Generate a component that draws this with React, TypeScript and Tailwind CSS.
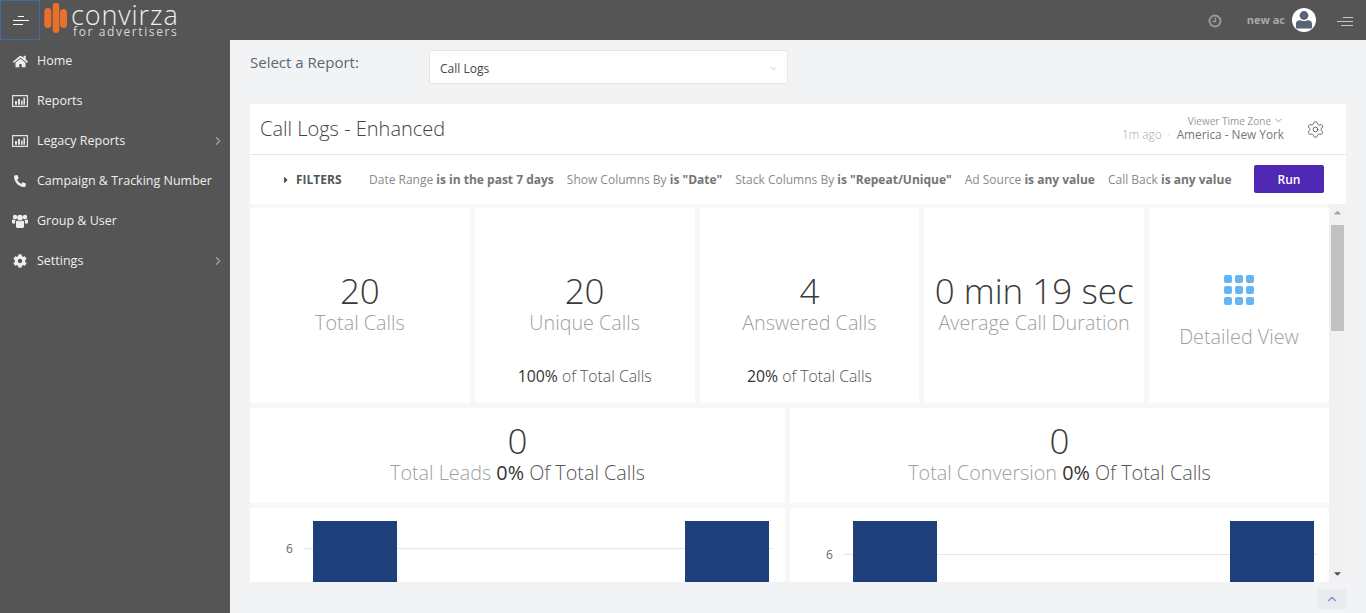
import React from "react";
import { FaHome, FaPhoneAlt, FaCog, FaCaretRight, FaCaretUp, FaCaretDown } from "react-icons/fa";
import { ChevronRight, ChevronDown, ChevronUp, Settings } from "lucide-react";

function ChartIcon() {
  return (
    <svg width="16" height="12" viewBox="0 0 16 12" fill="#e4e4e4">
      <path fillRule="evenodd" d="M0 0H16V12H0ZM1.2 1.2V10.8H14.8V1.2Z" />
      <path d="M3 6H5V9.8H3ZM6 4H8V9.8H6ZM9 5.5H10.6V9.8H9ZM11.4 2.8H13V9.8H11.4Z" />
    </svg>
  );
}

function UsersIcon() {
  return (
    <svg width="16" height="14" viewBox="0 0 16 14" fill="#eeeeee">
      <circle cx="3" cy="3" r="2.2" />
      <circle cx="13" cy="3" r="2.2" />
      <circle cx="8" cy="3.6" r="2.9" />
      <path d="M0 6.4C0 5.8.6 5.4 1.2 5.6 1.9 5.9 2.6 6 3.4 5.8 3 7 3 8.4 3.1 9.6H0.8C.3 9.6 0 9.3 0 8.8ZM16 6.4C16 5.8 15.4 5.4 14.8 5.6 14.1 5.9 13.4 6 12.6 5.8 13 7 13 8.4 12.9 9.6H15.2C15.7 9.6 16 9.3 16 8.8Z" />
      <path d="M4 8C4 7 4.7 6.5 5.5 6.8 7.1 7.4 8.9 7.4 10.5 6.8 11.3 6.5 12 7 12 8V12.6C12 13.4 11.5 14 10.8 14H5.2C4.5 14 4 13.4 4 12.6Z" />
    </svg>
  );
}

const nav = [
  { icon: <FaHome size={15} />, label: "Home" },
  { icon: <ChartIcon />, label: "Reports" },
  { icon: <ChartIcon />, label: "Legacy Reports", arrow: true },
  { icon: <FaPhoneAlt size={12} />, label: "Campaign & Tracking Number" },
  { icon: <UsersIcon />, label: "Group & User" },
  { icon: <FaCog size={14} />, label: "Settings", arrow: true },
];

function Filter({ name, value }: { name: string; value: string }) {
  return (
    <span className="whitespace-nowrap text-[12px] text-[#8a8a8a]">
      {name} <b className="font-bold text-[#757575]">{value}</b>
    </span>
  );
}

function Stat({ value, label, sub, pct }: { value: string; label: string; sub?: boolean; pct?: string }) {
  return (
    <div className="flex h-[195px] flex-1 flex-col items-center bg-white pt-[63px]">
      <div className="text-[35px] leading-[40px] font-light whitespace-nowrap text-[#3a3a3a]">{value}</div>
      <div className="text-[19.8px] leading-[24px] font-light whitespace-nowrap text-[#a0a0a0]">{label}</div>
      {sub && (
        <div className="mt-[30px] text-[15.8px] leading-[22px] font-light text-[#555]">
          <span className="font-normal text-[#333]">{pct}</span> of Total Calls
        </div>
      )}
    </div>
  );
}

function Wide({ label }: { label: string }) {
  return (
    <div className="flex h-[95px] flex-col items-center bg-white pt-[13px]">
      <div className="text-[35px] leading-[40px] font-light text-[#3a3a3a]">0</div>
      <div className="text-[19.8px] leading-[24px] font-light whitespace-nowrap text-[#a0a0a0]">
        {label} <span className="font-normal text-[#333]">0%</span> <span className="text-[#555]">Of Total Calls</span>
      </div>
    </div>
  );
}

function Chart({ width, grid, b1, b2, tick }: { width: number; grid: number; b1: number; b2: number; tick: number }) {
  return (
    <svg width={width} height={74} className="block bg-white">
      <text x={tick + 1} y={grid + 5} fontSize="12" fill="#666" fontFamily="Open Sans">6</text>
      <line x1={tick + 18} x2={width - 12} y1={grid + 0.5} y2={grid + 0.5} stroke="#e6e6e6" />
      <rect x={b1} y={13} width={84} height={61} fill="#1f3f7a" />
      <rect x={b2} y={13} width={84} height={61} fill="#1f3f7a" />
    </svg>
  );
}

export default function App() {
  return (
    <div className="flex h-[613px] w-[1366px] flex-col overflow-hidden bg-[#f2f3f5] font-['Open_Sans',sans-serif]">
      <header className="flex h-10 shrink-0 items-center bg-[#555555]">
        <div className="flex h-10 w-10 items-center justify-center border border-[#3f6ca8] pl-[1px]">
          <svg width="16" height="9" viewBox="0 0 16 9" fill="none" stroke="#ffffff" strokeWidth="1">
            <path d="M5 .5H11M0 4.5H16M0 8.5H10" />
          </svg>
        </div>
        <div className="ml-[4px] flex items-center">
          <svg width="24" height="32" viewBox="0 0 24 32" className="mt-[-4px]">
            <rect x="0.3" y="6" width="7" height="20" rx="3.5" fill="#e8702a" />
            <rect x="8.7" y="1" width="6.6" height="30" rx="3.3" fill="#e8702a" />
            <rect x="16" y="7" width="7" height="19" rx="3.5" fill="#e8702a" />
          </svg>
          <div className="mt-[-1px] ml-[3px] flex flex-col text-[#eeeeee]">
            <span className="text-[27px] leading-[25px] font-light tracking-[0.9px]">convirza</span>
            <span className="ml-[2px] text-[12px] leading-[10px] font-normal tracking-[1.6px] text-[#d8d8d8]">for advertisers</span>
          </div>
        </div>
        <div className="ml-auto flex items-center">
          <svg width="14" height="14" viewBox="0 0 14 14" fill="none" stroke="#999999" strokeWidth="2" className="mt-[2px]">
            <circle cx="7" cy="7" r="5.5" />
            <path d="M7.5 3.5V7.5H4.5" strokeWidth="1.4" />
          </svg>
          <span className="ml-[25px] text-[11px] font-bold text-[#a8a8a8]">new ac</span>
          <svg width="24" height="24" viewBox="0 0 24 24" className="ml-[7px]">
            <circle cx="12" cy="12" r="12" fill="#ffffff" />
            <circle cx="12" cy="7.5" r="4.4" fill="#5a6479" />
            <path d="M4 16C4 13 6 12.2 8.6 12.2 10.6 13.4 13.4 13.4 15.4 12.2 18 12.2 20 13 20 16V19.4C20 20 19.6 20.4 19 20.4H5C4.400 20.4 4 20 4 19.4Z" fill="#5a6479" />
          </svg>
          <svg width="16" height="9" viewBox="0 0 16 9" fill="none" stroke="#c8c8c8" strokeWidth="1" className="mt-[2px] mr-[13px] ml-[21px]">
            <path d="M6 .5H16M0 4.5H16M4 8.5H16" />
          </svg>
        </div>
      </header>
      <div className="flex min-h-0 flex-1">
        <aside className="w-[230px] shrink-0 bg-[#555555]">
          {nav.map((n) => (
            <div key={n.label} className="flex h-10 items-center pt-[2px] text-[12.5px] text-[#eeeeee]">
              <span className="flex w-[37px] shrink-0 pl-[12px] text-[#eeeeee]">
                <span className="flex w-[16px] justify-center">{n.icon}</span>
              </span>
              <span className="whitespace-nowrap">{n.label}</span>
              {n.arrow && <ChevronRight size={14} className="mr-[5px] ml-auto text-[#a0a0a0]" />}
            </div>
          ))}
        </aside>
        <main className="flex min-w-0 flex-1 flex-col pr-[20px] pl-[20px]">
          <div className="flex h-[64px] shrink-0 items-start pt-[10px]">
            <span className="w-[179px] pt-[2px] text-[15px] leading-[20px] text-[#5c6670]">Select a Report:</span>
            <div className="flex h-[34px] w-[359px] items-center justify-between rounded-[3px] border border-[#e3e5e8] bg-white pt-[3px] pr-[8px] pl-[10px] text-[12px] text-[#444]">
              Call Logs
              <ChevronDown size={11} className="text-[#c8c8c8]" />
            </div>
          </div>
          <section className="h-[100px] shrink-0 bg-white">
            <div className="flex h-[51px] items-center border-b border-[#e6e6e6] pr-[21px] pl-[10px]">
              <span className="text-[20px] font-light text-[#444]">Call Logs - Enhanced</span>
              <div className="mt-[-3px] mr-[2px] ml-auto flex flex-col items-end">
                <span className="flex h-[12px] items-center text-[10px] leading-[12px] text-[#9a9a9a]">
                  Viewer Time Zone <ChevronDown size={11} className="ml-[2px]" />
                </span>
                <span className="text-[11.8px] leading-[14px] text-[#777]">
                  <span className="font-light text-[#aaa]">1m ago &nbsp;·&nbsp; </span>America - New York
                </span>
              </div>
              <Settings size={19} strokeWidth={1.1} className="ml-[20px] text-[#555]" />
            </div>
            <div className="flex h-[49px] items-center pr-[22px] pl-[31px]">
              <FaCaretRight size={10} className="text-[#444]" />
              <span className="ml-[5px] w-[73px] text-[12px] font-bold text-[#555]">FILTERS</span>
              <div className="flex gap-[13px]">
                <Filter name="Date Range" value="is in the past 7 days" />
                <Filter name="Show Columns By" value={'is "Date"'} />
                <Filter name="Stack Columns By" value={'is "Repeat/Unique"'} />
                <Filter name="Ad Source" value="is any value" />
                <Filter name="Call Back" value="is any value" />
              </div>
              <button className="mt-[-2px] ml-auto flex h-[28px] w-[70px] items-center justify-center rounded-[2px] bg-[#4f28b4] pt-[2px] text-[12px] font-semibold text-white">
                Run
              </button>
            </div>
          </section>
          <div className="flex h-[378px] shrink-0 overflow-hidden bg-[#f7f7f7]">
            <div className="flex w-[1079px] flex-col gap-[5px] pt-[4px]">
              <div className="flex gap-[5px]">
                <Stat value="20" label="Total Calls" />
                <Stat value="20" label="Unique Calls" sub pct="100%" />
                <Stat value="4" label="Answered Calls" sub pct="20%" />
                <Stat value="0 min 19 sec" label="Average Call Duration" />
                <div className="flex h-[195px] w-[180px] shrink-0 flex-col items-center bg-white pt-[67px]">
                  <div className="grid grid-cols-3 gap-[3px]">
                    {Array.from({ length: 9 }).map((_, i) => (
                      <span key={i} className="h-[8px] w-[8px] rounded-[2px] bg-[#64b5f6]" />
                    ))}
                  </div>
                  <div className="mt-[18px] text-[19.8px] leading-[28px] font-light text-[#a0a0a0]">Detailed View</div>
                </div>
              </div>
              <div className="grid grid-cols-[535px_539px] gap-[5px]">
                <Wide label="Total Leads" />
                <Wide label="Total Conversion" />
              </div>
              <div className="grid grid-cols-[535px_539px] gap-[5px]">
                <Chart width={535} grid={40} b1={63} b2={435} tick={35} />
                <Chart width={539} grid={46} b1={63} b2={440} tick={35} />
              </div>
            </div>
            <div className="flex w-[17px] shrink-0 flex-col items-center justify-between bg-[#f1f1f1]">
              <div className="flex w-full flex-col items-center">
                <FaCaretUp size={11} className="mt-[3px] text-[#a3a3a3]" />
                <div className="mt-[7px] h-[106px] w-[13px] bg-[#c1c1c1]" />
              </div>
              <FaCaretDown size={11} className="mb-[3px] text-[#505050]" />
            </div>
          </div>
          <div className="flex flex-1 items-start justify-end">
            <div className="mt-[7px] flex h-5 w-[28px] items-center justify-center rounded-[2px] bg-[#e8ebf0]">
              <ChevronUp size={14} strokeWidth={2} className="text-[#7a95bd]" />
            </div>
          </div>
        </main>
      </div>
    </div>
  );
}
